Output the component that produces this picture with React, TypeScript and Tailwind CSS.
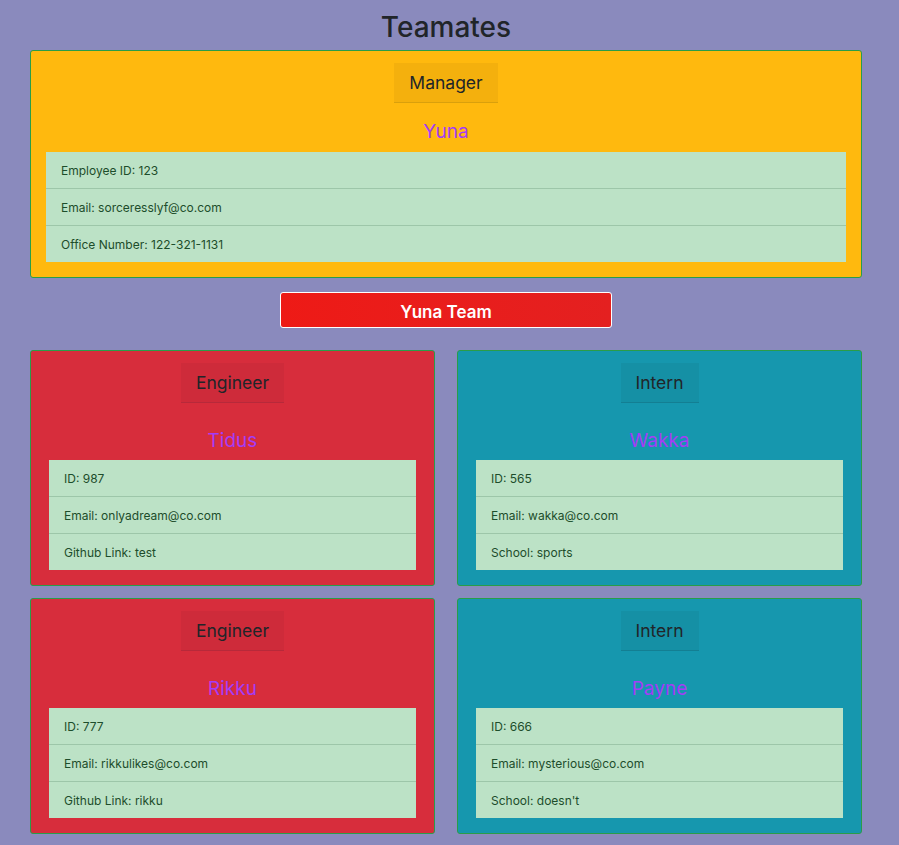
import React from "react";

type Person = {
  role: string;
  name: string;
  rows: string[];
  kind: "engineer" | "intern";
};

const people: Person[] = [
  { role: "Engineer", name: "Tidus", rows: ["ID: 987", "Email: onlyadream@co.com", "Github Link: test"], kind: "engineer" },
  { role: "Intern", name: "Wakka", rows: ["ID: 565", "Email: wakka@co.com", "School: sports"], kind: "intern" },
  { role: "Engineer", name: "Rikku", rows: ["ID: 777", "Email: rikkulikes@co.com", "Github Link: rikku"], kind: "engineer" },
  { role: "Intern", name: "Payne", rows: ["ID: 666", "Email: mysterious@co.com", "School: doesn't"], kind: "intern" },
];

function InfoList({ rows }: { rows: string[] }) {
  return (
    <ul className="bg-[#bce2c6] text-[#1d4d2b] text-[12px] leading-[15px]">
      {rows.map((r, i) => (
        <li
          key={i}
          className={
            i === 0
              ? "pl-[15px] pt-[11px] pb-[10px]"
              : "pl-[15px] pt-[11px] pb-[10px] border-t border-[#9dc6a9]"
          }
        >
          {r}
        </li>
      ))}
    </ul>
  );
}

function RoleHeader({ role, tone }: { role: string; tone: string }) {
  return (
    <div className="flex justify-center">
      <div className={tone}>{role}</div>
    </div>
  );
}

function MemberCard({ p }: { p: Person }) {
  const isEng = p.kind === "engineer";
  return (
    <div
      className={
        isEng
          ? "bg-[#d72d3c] border border-[#2a9d48] rounded-[3px] pt-[12px] pb-[15px] px-[18px]"
          : "bg-[#1697ae] border border-[#2a9d48] rounded-[3px] pt-[12px] pb-[15px] px-[18px]"
      }
    >
      <RoleHeader
        role={p.role}
        tone={
          isEng
            ? "h-[40px] px-[15px] pt-[2px] flex items-center text-[17.5px] text-[#212529] bg-[#ce2b3a] border-b border-[#b7293a]"
            : "h-[40px] px-[15px] pt-[2px] flex items-center text-[17.5px] text-[#212529] bg-[#1590a5] border-b border-[#137f93]"
        }
      />
      <div className="mt-[26px] mb-[7px] text-center text-[19px] leading-[24px] text-[#a43cf7]">{p.name}</div>
      <InfoList rows={p.rows} />
    </div>
  );
}

export default function App() {
  return (
    <div
      className="min-h-[845px] w-full bg-[#8a8abd] pb-[12px]"
      style={{ fontFamily: "Inter, 'Liberation Sans', sans-serif" }}
    >
      <div className="w-[832px] ml-[30px]">
        <h1 className="text-center text-[28px] leading-[36px] font-medium text-[#212529] pt-[9px] pb-[5px]">Teamates</h1>
        <div className="bg-[#ffb90e] border border-[#2a9d48] rounded-[3px] pt-[12px] pb-[15px] px-[15px]">
          <RoleHeader
            role="Manager"
            tone="h-[40px] px-[15px] pt-[2px] flex items-center text-[17.5px] text-[#212529] bg-[#f4b00d] border-b border-[#d9a00c]"
          />
          <div className="mt-[17px] mb-[8px] text-center text-[19px] leading-[24px] text-[#a43cf7]">Yuna</div>
          <InfoList rows={["Employee ID: 123", "Email: sorceresslyf@co.com", "Office Number: 122-321-1131"]} />
        </div>
        <div className="flex justify-center mt-[14px] mb-[22px]">
          <div className="w-[332px] h-[36px] pt-[5px] bg-gradient-to-r from-[#ee1a16] to-[#e42020] border border-white rounded-[3px] flex items-center justify-center text-white text-[17px] font-semibold">
            Yuna Team
          </div>
        </div>
        <div className="grid grid-cols-2 gap-x-[22px] gap-y-[12px]">
          {people.map((p) => (
            <MemberCard key={p.name} p={p} />
          ))}
        </div>
      </div>
    </div>
  );
}
